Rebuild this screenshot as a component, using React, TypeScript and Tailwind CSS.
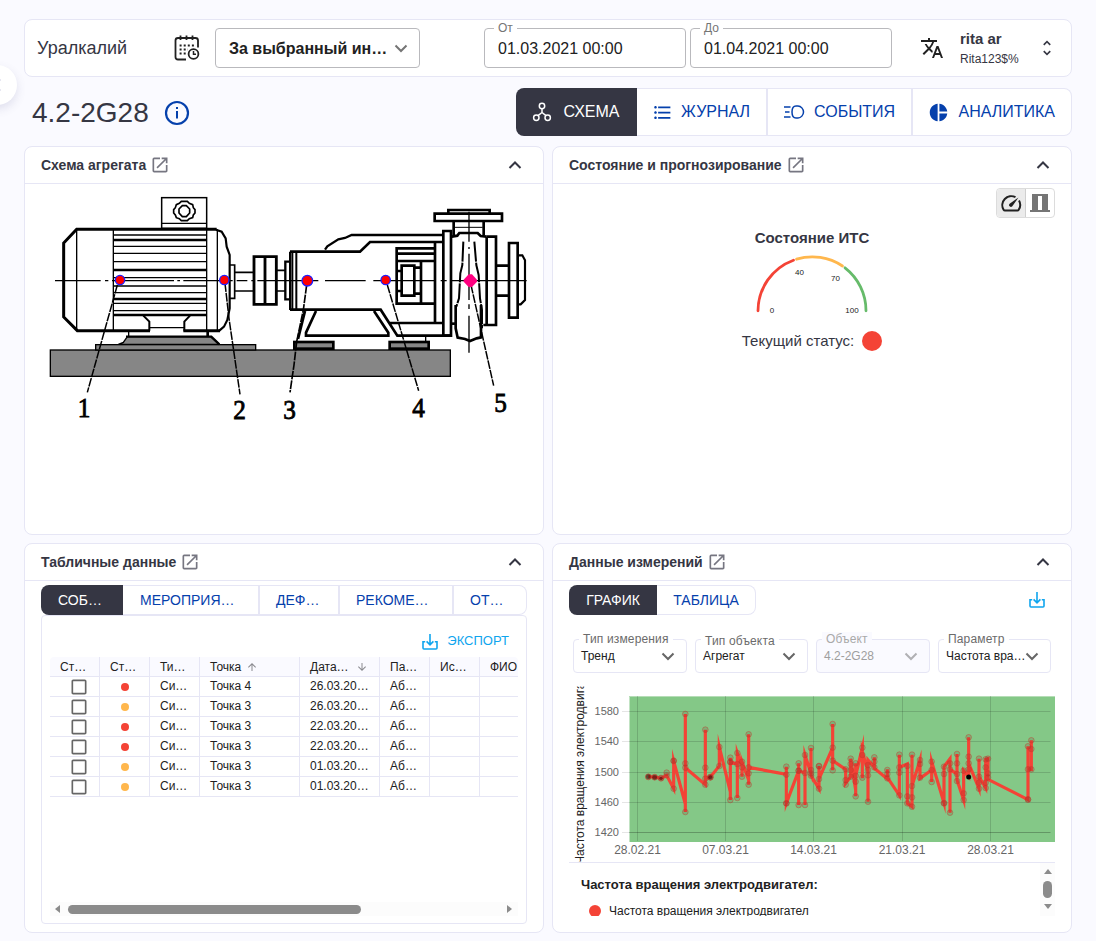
import React from "react";
import {
  MdOpenInNew,
  MdTranslate,
  MdFormatListBulleted,
  MdPieChart,
  MdUnfoldMore,
  MdArrowUpward,
  MdArrowDownward,
  MdCheckBoxOutlineBlank,
} from "react-icons/md";

const FONT = "font-['Liberation_Sans',Arial,sans-serif]";

function Chevron({ up = false, className = "" }: { up?: boolean; className?: string }) {
  return (
    <svg width="14" height="14" viewBox="0 0 14 14" fill="none" stroke="currentColor" strokeWidth="2" className={className}>
      <path d={up ? "M1.5 10 L7 4.5 L12.5 10" : "M1.5 4.5 L7 10 L12.5 4.5"} />
    </svg>
  );
}

function DownloadIcon({ size = 16 }: { size?: number }) {
  return (
    <svg width={size} height={size} viewBox="0 0 16 16" fill="none" stroke="currentColor" strokeWidth="1.6">
      <path d="M3.2 7.8 H1 V14 Q1 15 2 15 H14 Q15 15 15 14 V7.8 H12.8" />
      <path d="M8 0 V10.5 M4.6 7.4 L8 10.8 L11.4 7.4" />
    </svg>
  );
}

function CalendarIcon() {
  return (
    <svg width="26" height="26" viewBox="0 0 26 26" fill="none" stroke="#212121" strokeWidth="1.8">
      <path d="M12 24.5 H4 Q1.5 24.5 1.5 22 V5.5 Q1.5 3 4 3 H21.500 Q24 3 24 5.5 V12.500" />
      <path d="M6.5 0.5 V5 M12.5 0.5 V5 M18.5 0.5 V5" />
      <path d="M5.6 10.5 H20 M5.6 14.5 H14 M5.6 18.5 H12" strokeDasharray="2 2.1" />
      <circle cx="19.500" cy="19" r="4.900" />
      <path d="M19.500 16 V19.3 H22" strokeWidth="1.5" />
    </svg>
  );
}

function SchemeIcon() {
  return (
    <svg width="20" height="20" viewBox="0 0 20 20" fill="none" stroke="currentColor" strokeWidth="1.5">
      <circle cx="10" cy="4" r="2.7" />
      <circle cx="4.300" cy="15.700" r="2.7" />
      <circle cx="15.700" cy="15.700" r="2.7" />
      <path d="M10 6.7 V10.500 L6 13.700 M10 10.500 L14 13.700" />
    </svg>
  );
}

function EventsIcon() {
  return (
    <svg width="22" height="16" viewBox="0 0 22 16" fill="none" stroke="currentColor" strokeWidth="1.5">
      <path d="M1 3 H7.5 M2 8 H6.5 M1 13 H7.5" />
      <path d="M13 2 H15 C18 2 20.5 5 20.5 8 C20.5 11 18 14 15 14 H13 C10 14 9 11 9 8 C9 5 10 2 13 2 Z" />
    </svg>
  );
}

function Panel({ title, children }: { title: string; children: React.ReactNode }) {
  return (
    <section className="flex min-w-0 flex-1 flex-col rounded-lg border border-[#e6e6f5] bg-white">
      <header className="flex h-[37px] shrink-0 items-center justify-between border-b border-[#e6e6f5] pr-[21px] pl-4 text-[#353643]">
        <div className="flex items-center gap-1">
          <h2 className="text-sm font-bold whitespace-nowrap">{title}</h2>
          <MdOpenInNew size={20} className="text-[#767681]" />
        </div>
        <Chevron up />
      </header>
      {children}
    </section>
  );
}

function DateField({ label, value }: { label: string; value: string }) {
  return (
    <div className="relative flex h-10 w-[202px] items-center rounded border border-[#b9b9bd] px-[13px] pt-[2px] text-base text-[#212121]">
      <span className="absolute -top-[8px] left-[9px] bg-white px-1 text-xs leading-[14px] text-[#757575]">{label}</span>
      {value}
    </div>
  );
}

function SmallSelect({
  label,
  value,
  width,
  disabled = false,
  top = "-top-[8px]",
}: {
  label: string;
  value: string;
  width: string;
  disabled?: boolean;
  top?: string;
}) {
  return (
    <div
      className={`relative flex h-[34px] items-center justify-between rounded border border-[#e6e6f5] pr-[11px] pl-[7px] text-xs ${width} ${
        disabled ? "bg-[#fafaff] text-[#9e9e9e]" : "bg-white text-[#212121]"
      }`}
    >
      <span
        className={`absolute left-[5px] px-1 text-xs leading-[14px] tracking-[0.15px] whitespace-nowrap ${top} ${
          disabled ? "bg-[#fafaff] text-[#a9a9a9]" : "bg-white text-[#6b6b6b]"
        }`}
      >
        {label}
      </span>
      <span className="w-0 whitespace-nowrap">{value}</span>
      <Chevron className={disabled ? "shrink-0 text-[#b0b0b4]" : "shrink-0 text-[#666]"} />
    </div>
  );
}

const CALLOUTS: [string, number, number][] = [
  ["1", 44, 232],
  ["2", 199.5, 233.5],
  ["3", 249.5, 233.5],
  ["4", 378.5, 232],
  ["5", 460.5, 227],
];

function UnitDrawing() {
  const G = "#868686";
  return (
    <svg width="500" height="240" viewBox="0 0 500 240" className="mt-px ml-[15px] block">
      <g transform="scale(0.33333)" fill="none" stroke="#000" strokeWidth="4">
        <rect x="31" y="495" width="1200" height="79" fill={G} strokeWidth="4" />
        <rect x="167" y="479" width="480" height="16" fill={G} />
        <path d="M262 455 H512 L538 478 H235 L250 472 Z" fill={G} />
        <path d="M258 455 H514 L538 478" strokeWidth="7" />
        <rect x="365" y="38" width="135" height="92" strokeWidth="4.500" />
        <path d="M365 115 H500" />
        <path
          d="M424 49 H442 L448 55 L458 59 L460 68 L465 74 V84 L460 90 L458 98 L448 101 L442 107 H424 L418 101 L409 98 L406 90 L401 84 V74 L406 68 L409 59 L418 55 Z"
          strokeWidth="5"
        />
        <path d="M427 62 H439 L449 72 V84 L439 95 H427 L417 84 V72 Z" strokeWidth="5" />
        <path d="M530 133 H110 L71 174 V396 L112 437 H330 M430 437 H540" strokeWidth="9" />
        <path d="M528 134 L545 140 L557 160 L560 185 L569 210 V370 L562 405 L552 425 L538 437" strokeWidth="6.500" />
        <path d="M110 133 V437 M220 133 V437 M500 133 V437 M532 133 V437" />
        <path d="M220 150 H500 M220 184 H500 M220 205 H500 M220 230 H500 M220 278 H500 M220 303 H500 M220 323 H500 M220 355 H500 M220 377 H500" />
        <path d="M220 165 H500 M220 255 H500 M220 342 H500 M220 390 H500" strokeWidth="8" />
        <path d="M310 392 L328 410 V437 M450 392 L433 410 V437" strokeWidth="6" />
        <path d="M328 428 H433 M266 439 V455" />
        <path d="M503 439 V455" strokeWidth="8" />
        <path
          d="M45 287 H182 M195 287 H205 M216 287 H402 M412 287 H420 M430 287 H578 M590 287 H622 M634 287 H642 M652 287 H835 M855 287 H977 M1000 287 H1188 M1202 287 H1220 M1232 287 H1460"
          strokeWidth="4"
        />
        <path d="M570 240 H584 V340 H570 M584 262 H642 M584 318 H642 M709 256 H735 M709 318 H735" strokeWidth="5" />
        <path d="M642 215 H709 V358 H642 Z M675 215 V358" strokeWidth="8.500" />
        <path d="M750 230 H736 V343 H750" strokeWidth="7" />
        <path d="M750 200 V375 M769 202 V374 M757 200 V375" strokeWidth="6" />
        <g transform="translate(750 0)" strokeWidth="8">
          <path d="M0 200 H210 L240 171 H460 M0 374 H272 L322 452 H482 M300 414 H460" />
          <path d="M105 194 L112 184 L145 163 L165 159 L185 150 H460" strokeWidth="7" />
          <path d="M45 378 L24 462" />
          <path d="M78 378 L48 443 V452 H295 V443 L252 378" />
          <rect x="13" y="471" width="117" height="20" fill={G} />
          <rect x="299" y="471" width="117" height="20" fill={G} />
          <path d="M407 455 V470" strokeWidth="4" />
          <path d="M435 172 V412 M435 190 H320 V356 H435 M320 206 H435 M320 228 H435" />
          <path d="M335 242 H373 V332 H335 Z M393 230 V356 M322 258 H335 M322 318 H335 M373 248 H393 M373 326 H393" />
          <path d="M460 138 H483 V452 H460 Z" />
          <path d="M434 86 H636 V108 H434 Z M475 86 V75 H599 V86" />
          <path d="M491 108 V150 M581 108 V150" />
          <path d="M495 127 H578" strokeWidth="3" />
          <path d="M485 155 L502 152 L508 144 H563 L572 153 L590 155" />
          <path d="M485 416 H500" />
          <path d="M497 360 V430 L503 458 L525 462 L540 468 L560 460 L573 457 V360" strokeWidth="8" />
          <path d="M520 170 L517 240 L511 265 L507 340 L499 365" strokeWidth="6" strokeDasharray="60 3" />
          <path d="M553 170 L559 240 L566 270 L570 340 L576 375 V430" strokeWidth="6" strokeDasharray="60 3" />
          <path d="M590 155 H618 V420 H580 M590 155 V420" />
          <path d="M618 242 H657 M618 332 H657 M657 174 H683 V398 H657 Z" />
          <path d="M683 211 H697 L705 226 V345 L692 358 H683" strokeWidth="6.500" />
          <path d="M537 80 V170 M537 186 V192 M537 206 V345 M537 358 V372 M537 392 V503" strokeWidth="4" />
          <path d="M50 300 L40 375 L20 470 L12 540 L0 622" strokeWidth="5" strokeDasharray="26 3" />
          <path d="M292 300 L386 617" strokeWidth="4.500" strokeDasharray="26 3" />
          <path d="M543 300 L611 602" strokeWidth="4.500" strokeDasharray="26 3" />
        </g>
        <path d="M232 300 L142 622 M555 295 L567 400 L600 628" strokeWidth="4.500" strokeDasharray="26 3" />
        <g fill="#ff0000" stroke="#1e1eff" strokeWidth="4">
          <circle cx="240" cy="285" r="14" />
          <circle cx="553" cy="285" r="14" />
          <circle cx="802" cy="287" r="16" />
          <circle cx="1037" cy="285" r="14" />
        </g>
        <path d="M1286 268 H1296 L1311 284 V290 L1296 306 H1286 L1271 290 V284 Z" fill="#ff0080" stroke="none" />
      </g>
      <g
        className="font-['Liberation_Serif','Times_New_Roman',serif]"
        fontSize="28"
        textAnchor="middle"
        fill="#000"
        stroke="#000"
        strokeWidth="0.9"
      >
        {CALLOUTS.map(([t, x, y]) => (
          <text key={t} transform={`translate(${x} ${y}) scale(0.9 1)`}>
            {t}
          </text>
        ))}
      </g>
    </svg>
  );
}

const SERIES: [number, number][] = [
  [265, 290], [284, 291], [303, 295], [320, 286], [341, 326], [341, 243], [376, 372], [376, 396], [376, 102], [376, 263],
  [436, 314], [436, 149], [436, 296], [451, 291], [478, 258], [478, 201], [511, 336], [511, 360], [511, 233], [511, 246],
  [532, 252], [532, 354], [532, 219], [546, 260], [546, 290], [546, 245], [566, 300], [566, 314], [566, 163], [566, 262],
  [679, 283], [679, 260], [679, 370], [716, 272], [716, 375], [716, 250], [716, 272], [735, 279], [735, 375], [735, 225],
  [753, 280], [753, 204], [753, 287], [777, 326], [777, 258], [777, 297], [818, 203], [818, 271], [818, 132], [818, 242],
  [857, 268], [857, 310], [872, 290], [872, 236], [887, 330], [887, 349], [887, 250], [887, 287], [907, 203], [907, 295],
  [907, 215], [924, 275], [924, 365], [924, 240], [943, 262], [943, 232], [943, 265], [982, 297], [982, 268], [982, 292],
  [1018, 346], [1018, 224], [1018, 262], [1042, 252], [1042, 370], [1056, 380], [1056, 224], [1056, 318], [1080, 240],
  [1080, 295], [1115, 270], [1115, 306], [1115, 245], [1152, 369], [1152, 260], [1170, 236], [1170, 398], [1170, 268],
  [1191, 282], [1191, 222], [1191, 300], [1211, 360], [1211, 272], [1226, 290], [1226, 172], [1226, 250], [1257, 326],
  [1257, 236], [1257, 290], [1277, 324], [1277, 238], [1284, 236], [1284, 298], [1404, 359], [1404, 199], [1404, 268],
  [1414, 268], [1414, 181],
];

const MARKS: [number, number][] = [
  [265, 290], [265, 291], [284, 292], [284, 291], [303, 294], [303, 295], [320, 278], [320, 286], [341, 243], [341, 242],
  [341, 326], [376, 102], [376, 250], [376, 263], [376, 396], [436, 149], [436, 263], [436, 296], [436, 314], [451, 291],
  [451, 292], [451, 292], [478, 201], [478, 258], [511, 233], [511, 246], [511, 246], [511, 360], [532, 219], [532, 252],
  [532, 354], [546, 245], [546, 262], [546, 290], [566, 163], [566, 262], [566, 280], [566, 314], [679, 260], [679, 284],
  [679, 370], [679, 370], [716, 250], [716, 272], [716, 272], [716, 375], [735, 225], [735, 279], [735, 375], [753, 204],
  [753, 270], [753, 280], [753, 287], [777, 258], [777, 259], [777, 297], [777, 326], [818, 132], [818, 203], [818, 242],
  [818, 271], [857, 268], [857, 300], [857, 314], [872, 236], [872, 252], [872, 270], [872, 290], [887, 250], [887, 287],
  [887, 305], [887, 349], [907, 203], [907, 225], [907, 293], [924, 255], [924, 270], [924, 286], [924, 365], [943, 232],
  [943, 245], [943, 262], [982, 270], [982, 282], [982, 295], [1018, 224], [1018, 262], [1018, 278], [1018, 346],
  [1042, 258], [1042, 349], [1042, 370], [1056, 224], [1056, 318], [1056, 352], [1056, 380], [1080, 240], [1080, 252],
  [1080, 293], [1115, 245], [1115, 270], [1115, 306], [1152, 260], [1152, 282], [1152, 369], [1152, 370], [1170, 250],
  [1170, 268], [1170, 398], [1191, 222], [1191, 250], [1191, 282], [1191, 303], [1211, 272], [1211, 340], [1211, 360],
  [1226, 172], [1226, 230], [1226, 250], [1226, 268], [1257, 236], [1257, 290], [1257, 308], [1257, 326], [1277, 238],
  [1277, 262], [1277, 308], [1277, 324], [1284, 236], [1284, 280], [1284, 292], [1404, 199], [1404, 268], [1404, 358],
  [1404, 359], [1414, 181], [1414, 207], [1414, 268],
];

const Y_TICKS: [string, number][] = [
  ["1580", 31.5],
  ["1540", 61.5],
  ["1500", 92],
  ["1460", 122],
  ["1420", 152.5],
];
const X_TICKS: [string, number][] = [
  ["28.02.21", 77.5],
  ["07.03.21", 165.5],
  ["14.03.21", 253.5],
  ["21.03.21", 342],
  ["28.03.21", 430.5],
];

function TrendChart() {
  return (
    <svg width="486" height="182" viewBox="9 0 486 182" className="block">
      <defs>
        <clipPath id="axis-title">
          <rect x="9" y="6.500" width="20" height="175" />
        </clipPath>
      </defs>
      <rect x="69.500" y="16" width="425.500" height="146" fill="#84c887" />
      <path d="M69 16.500 H495" stroke="#b5ddb6" />
      <path
        d="M62 31.500 H69 M62 61.500 H69 M62 92.500 H69 M62 122.500 H69 M62 152.500 H69"
        stroke="#000"
        strokeOpacity="0.1"
      />
      <path
        d="M69 31.500 H490.500 M69 61.500 H490.500 M69 92.500 H490.500 M69 122.500 H490.500 M77.500 16 V161 M165.500 16 V161 M253.500 16 V161 M342.500 16 V161 M430.500 16 V161"
        stroke="#000"
        strokeOpacity="0.14"
      />
      <path d="M69 152.500 H490.500" stroke="#000" strokeOpacity="0.25" />
      <g transform="scale(0.33333)">
        <polyline points={SERIES.map((p) => p.join(",")).join(" ")} fill="none" stroke="#f44336" strokeWidth="9.500" strokeMiterlimit="10" />
        {MARKS.map(([x, y], i) => (
          <circle key={i} cx={x} cy={y} r="8.500" fill="#601010" fillOpacity="0.13" stroke="#c83a30" strokeOpacity="0.45" strokeWidth="3" />
        ))}
        <circle cx="1226" cy="291" r="7.500" fill="#000" />
        <g fill="#300" fillOpacity="0.5">
          <circle cx="265" cy="290" r="7" />
          <circle cx="284" cy="292" r="7" />
          <circle cx="303" cy="295" r="5" />
          <circle cx="451" cy="292" r="6" />
        </g>
      </g>
      <g fontSize="11" fill="#666" textAnchor="end">
        {Y_TICKS.map(([t, y]) => (
          <text key={t} x="59" y={y + 3.5}>
            {t}
          </text>
        ))}
      </g>
      <g fontSize="12" fill="#666" textAnchor="middle">
        {X_TICKS.map(([t, x]) => (
          <text key={t} x={x} y="173.500">
            {t}
          </text>
        ))}
      </g>
      <g clipPath="url(#axis-title)">
        <text transform="translate(24 184) rotate(-90)" fontSize="12" fill="#212121">
          Частота вращения электродвигател
        </text>
      </g>
    </svg>
  );
}

const COLS = "grid grid-cols-[50px_50px_50px_100px_80px_50px_50px_38px]";
const ROWS = [
  { dot: "bg-[#f44336]", point: "Точка 4", date: "26.03.20…" },
  { dot: "bg-[#ffb74d]", point: "Точка 3", date: "26.03.20…" },
  { dot: "bg-[#f44336]", point: "Точка 3", date: "22.03.20…" },
  { dot: "bg-[#f44336]", point: "Точка 3", date: "22.03.20…" },
  { dot: "bg-[#ffb74d]", point: "Точка 3", date: "01.03.20…" },
  { dot: "bg-[#ffb74d]", point: "Точка 3", date: "01.03.20…" },
];

function Cell({ children, last = false }: { children?: React.ReactNode; last?: boolean }) {
  return (
    <div className={`flex items-center overflow-hidden border-b border-[#e6e6f5] pl-[10px] whitespace-nowrap ${last ? "" : "border-r"}`}>
      {children}
    </div>
  );
}

function EventTable() {
  return (
    <div className="w-[468px] text-xs text-[#212121]">
      <div className={`${COLS} h-5 rounded-t bg-[#fafaff]`}>
        <Cell>Ст…</Cell>
        <Cell>Ст…</Cell>
        <Cell>Ти…</Cell>
        <Cell>
          Точка <MdArrowUpward size={12} className="ml-[5px] text-[#8a8a8f]" />
        </Cell>
        <Cell>
          Дата… <MdArrowDownward size={12} className="ml-[7px] text-[#8a8a8f]" />
        </Cell>
        <Cell>Па…</Cell>
        <Cell>Ис…</Cell>
        <Cell last>ФИО</Cell>
      </div>
      {ROWS.map((r, i) => (
        <div key={i} className={`${COLS} h-5`}>
          <Cell>
            <MdCheckBoxOutlineBlank size={20} className="mt-px ml-[9px] shrink-0 text-[#666]" />
          </Cell>
          <Cell>
            <span className={`mt-px ml-[11px] size-2 rounded-full ${r.dot}`} />
          </Cell>
          <Cell>
            <span className="pb-[2px]">Си…</span>
          </Cell>
          <Cell>
            <span className="pb-[2px]">{r.point}</span>
          </Cell>
          <Cell>
            <span className="pb-[2px]">{r.date}</span>
          </Cell>
          <Cell>
            <span className="pb-[2px]">Аб…</span>
          </Cell>
          <Cell />
          <Cell last />
        </div>
      ))}
    </div>
  );
}

export default function App() {
  return (
    <div className={`relative flex h-[941px] w-[1096px] flex-col overflow-hidden bg-[#fafaff] px-6 pt-[19px] ${FONT}`}>
      <button className="absolute top-[65px] -left-[23px] flex size-10 items-center justify-end rounded-full bg-white pr-[14px] shadow-[0_4px_10px_rgba(90,90,140,0.16)]">
        <svg width="6" height="12" viewBox="0 0 6 12" fill="none" stroke="#d0d0e4">
          <path d="M2 1 H4 M2 11 H4" />
        </svg>
      </button>

      <header className="flex h-[58px] shrink-0 items-center rounded-lg border border-[#e6e6f5] bg-white pl-3">
        <span className="w-[137px] text-lg text-[#353643]">Уралкалий</span>
        <CalendarIcon />
        <div className="ml-[15px] flex h-10 w-[205px] items-center justify-between rounded border border-[#b9b9bd] pr-[11px] pl-[13px] text-base font-bold text-[#212121]">
          <span className="pt-[2px] whitespace-nowrap">За выбранный ин…</span>
          <Chevron className="shrink-0 text-[#757575]" />
        </div>
        <div className="ml-16 flex gap-1">
          <DateField label="От" value="01.03.2021 00:00" />
          <DateField label="До" value="01.04.2021 00:00" />
        </div>
        <MdTranslate size={24} className="ml-7 text-[#212121]" />
        <div className="ml-4 w-[77px] pt-[2px] text-[#353643]">
          <div className="text-[15px] leading-5 font-bold">rita ar</div>
          <div className="text-xs leading-5">Rita123$%</div>
        </div>
        <MdUnfoldMore size={20} className="text-[#353643]" />
      </header>

      <div className="mt-[11px] flex h-12 shrink-0 items-center justify-between">
        <div className="flex items-center gap-[15px] pt-[2px] pl-2">
          <h1 className="text-[28px] leading-8 text-[#353643]">4.2-2G28</h1>
          <svg width="26" height="26" viewBox="0 0 26 26" fill="none" stroke="#0540ac" strokeWidth="2.2">
            <circle cx="13" cy="13" r="11" />
            <path d="M13 11 V18.500 M13 7 V9" strokeWidth="2" />
          </svg>
        </div>
        <nav className="flex h-12 text-base text-[#0540ac]">
          <button className="flex w-[121px] items-center gap-[11.5px] rounded-l-lg bg-[#353643] pl-4 text-white">
            <SchemeIcon />
            СХЕМА
          </button>
          <button className="flex w-[131px] items-center gap-2 border-y border-r-2 border-[#e6e6f5] bg-white pl-[15px]">
            <MdFormatListBulleted size={21} />
            ЖУРНАЛ
          </button>
          <button className="flex w-[145px] items-center gap-[9px] border-y border-r-2 border-[#e6e6f5] bg-white pl-[15px]">
            <EventsIcon />
            СОБЫТИЯ
          </button>
          <button className="flex w-[159px] items-center gap-[9.5px] rounded-r-lg border-y border-r border-[#e6e6f5] bg-white pl-[15px]">
            <MdPieChart size={21} />
            АНАЛИТИКА
          </button>
        </nav>
      </div>

      <div className="mt-[10px] flex h-[389px] shrink-0 gap-2">
        <Panel title="Схема агрегата">
          <UnitDrawing />
        </Panel>
        <Panel title="Состояние и прогнозирование">
          <div className="mt-1 mr-4 flex h-[30px] w-[59px] self-end rounded border border-[#dcdcdc]">
            <button className="flex w-[29px] items-center justify-center rounded-l border-r border-[#cfcfcf] bg-[#ebebeb]">
              <svg width="22" height="18" viewBox="0 0 22 18" fill="none" stroke="#212121" strokeWidth="2">
                <path d="M15.500 3.200 A9 9 0 0 0 3.600 15.800 Q4 16.500 5 16.500 H17.500 Q18.300 16.500 18.700 15.800 A9 9 0 0 0 19 6.500" />
                <path d="M18.500 3.500 L12.300 12.300 A1.800 1.800 0 0 1 9.600 9.700 Z" fill="#212121" stroke="none" />
              </svg>
            </button>
            <button className="flex flex-1 items-center justify-center">
              <svg width="20" height="18" viewBox="0 0 20 18" fill="#757575">
                <path d="M2 0 H18 V16 H20 V18 H0 V16 H2 Z M8 2 V16 H12 V2 Z" fillRule="evenodd" />
              </svg>
            </button>
          </div>
          <div className="flex flex-col items-center text-[15px] text-[#353643]">
            <h3 className="mt-[10px] leading-5 font-bold">Состояние ИТС</h3>
            <svg width="120" height="70" viewBox="0 0 120 70" className="mt-1" fill="none" strokeWidth="2.800" strokeLinecap="round">
              <path d="M6 58.800 A54 54 0 0 1 41.500 8.200" stroke="#f44336" />
              <path d="M44.500 7.200 A54 54 0 0 1 90.500 14" stroke="#ffb74d" />
              <path d="M93 15.800 A54 54 0 0 1 114 58.800" stroke="#66bb6a" />
              <g fill="#212121" fontSize="8" textAnchor="middle">
                <text x="20" y="61">0</text>
                <text x="47.500" y="23">40</text>
                <text x="83.500" y="29">70</text>
                <text x="100" y="61">100</text>
              </g>
            </svg>
            <div className="mt-[9px] flex h-5 items-center gap-2">
              Текущий статус:
              <span className="size-5 rounded-full bg-[#f44336]" />
            </div>
          </div>
        </Panel>
      </div>

      <div className="mt-2 flex h-[390px] shrink-0 gap-2">
        <Panel title="Табличные данные">
          <div className="mt-1 flex flex-1 flex-col px-4">
            <div className="flex h-[30px] shrink-0 text-sm text-[#0540ac]">
              <button className="w-[82px] rounded-l-lg bg-[#353643] pl-[17px] text-left text-white">СОБ…</button>
              <button className="w-[137px] border-y border-r-2 border-[#e6e6f5] pl-[17px] text-left">МЕРОПРИЯ…</button>
              <button className="w-[80px] border-y border-r-2 border-[#e6e6f5] pl-4 text-left">ДЕФ…</button>
              <button className="w-[114px] border-y border-r-2 border-[#e6e6f5] pl-4 text-left">РЕКОМЕ…</button>
              <button className="flex-1 rounded-r-lg border-y border-r border-[#e6e6f5] pl-4 text-left">ОТ…</button>
            </div>
            <div className="flex h-[309px] flex-col rounded border border-[#e6e6f5] px-2">
              <div className="flex h-[41px] items-center justify-end gap-[9px] pt-[9px] pr-[9px] text-[13px] text-[#0fa5ee]">
                <span className="mt-px">
                  <DownloadIcon />
                </span>
                ЭКСПОРТ
              </div>
              <EventTable />
              <div className="mt-auto mb-[7px] flex h-[14px] w-[468px] items-center bg-[#fcfcfc]">
                <span className="ml-[5px] border-y-[4.5px] border-r-[5px] border-y-transparent border-r-[#8b8b8b]" />
                <span className="ml-2 h-[9px] w-[293px] rounded-full bg-[#8b8b8b]" />
                <span className="mr-[6px] ml-auto border-y-[4.5px] border-l-[5px] border-y-transparent border-l-[#8b8b8b]" />
              </div>
            </div>
          </div>
        </Panel>

        <Panel title="Данные измерений">
          <div className="mt-1 flex flex-1 flex-col px-4">
            <div className="flex h-[30px] shrink-0 items-center justify-between text-sm">
              <div className="flex h-[30px]">
                <button className="w-[88px] rounded-l-lg bg-[#353643] text-white">ГРАФИК</button>
                <button className="w-[99px] rounded-r-lg border-y border-r border-[#e6e6f5] text-[#0540ac]">ТАБЛИЦА</button>
              </div>
              <span className="mr-[10px] text-[#0fa5ee]">
                <DownloadIcon />
              </span>
            </div>
            <div className="mt-6 flex gap-2 pl-1">
              <SmallSelect label="Тип измерения" value="Тренд" width="w-[114px]" />
              <SmallSelect label="Тип объекта" value="Агрегат" width="w-[113px]" top="-top-[6px]" />
              <SmallSelect label="Объект" value="4.2-2G28" width="w-[114px]" disabled />
              <SmallSelect label="Параметр" value="Частота вра…" width="w-[113px]" />
            </div>
            <div className="mt-[7px]">
              <TrendChart />
            </div>
            <div className="flex h-[54px] overflow-hidden border-t border-[#e6e6f5] text-[#212121]">
              <div className="flex-1 pl-3">
                <div className="mt-[14px] text-[13px] leading-4 font-bold">Частота вращения электродвигател:</div>
                <div className="mt-[10px] ml-2 flex items-center gap-2 text-xs leading-4">
                  <span className="size-3 rounded-full bg-[#f44336]" />
                  Частота вращения электродвигател
                </div>
              </div>
              <div className="flex w-[15px] flex-col items-center bg-[#fcfcfc]">
                <span className="mt-[6px] border-x-[4.5px] border-b-[5px] border-x-transparent border-b-[#8b8b8b]" />
                <span className="mt-[7px] h-[17px] w-[9px] rounded-full bg-[#8b8b8b]" />
                <span className="mt-[6px] border-x-[4.5px] border-t-[5px] border-x-transparent border-t-[#8b8b8b]" />
              </div>
            </div>
          </div>
        </Panel>
      </div>
    </div>
  );
}
